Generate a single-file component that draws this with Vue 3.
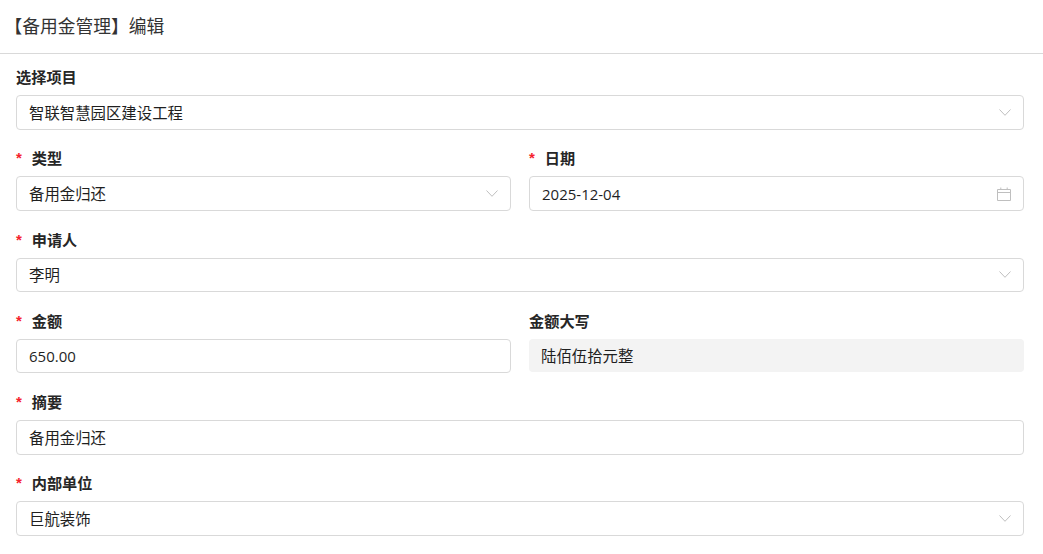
<template>
  <div class="page">
    <div class="header">【备用金管理】编辑</div>
    <form class="form">
      <div class="item">
        <label class="label">选择项目</label>
        <div class="control">
          <span>智联智慧园区建设工程</span>
          <svg class="arrow" viewBox="0 0 12 7"><path d="M.5.5 6 6.3 11.5.5" /></svg>
        </div>
      </div>
      <div class="row">
        <div class="item">
          <label class="label"><i class="star">*</i>类型</label>
          <div class="control">
            <span>备用金归还</span>
            <svg class="arrow" viewBox="0 0 12 7"><path d="M.5.5 6 6.3 11.5.5" /></svg>
          </div>
        </div>
        <div class="item">
          <label class="label"><i class="star">*</i>日期</label>
          <div class="control">
            <span class="num">2025-12-04</span>
            <svg class="calendar" viewBox="0 0 14 14">
              <path d="M.5 2.5h13v11H.5zM.5 5.5h13M3.8.5v2.5M10.2.5v2.5" />
            </svg>
          </div>
        </div>
      </div>
      <div class="item">
        <label class="label"><i class="star">*</i>申请人</label>
        <div class="control">
          <span>李明</span>
          <svg class="arrow" viewBox="0 0 12 7"><path d="M.5.5 6 6.3 11.5.5" /></svg>
        </div>
      </div>
      <div class="row">
        <div class="item">
          <label class="label"><i class="star">*</i>金额</label>
          <div class="control"><span class="num">650.00</span></div>
        </div>
        <div class="item">
          <label class="label">金额大写</label>
          <div class="control readonly"><span>陆佰伍拾元整</span></div>
        </div>
      </div>
      <div class="item">
        <label class="label"><i class="star">*</i>摘要</label>
        <div class="control"><span>备用金归还</span></div>
      </div>
      <div class="item">
        <label class="label"><i class="star">*</i>内部单位</label>
        <div class="control">
          <span>巨航装饰</span>
          <svg class="arrow" viewBox="0 0 12 7"><path d="M.5.5 6 6.3 11.5.5" /></svg>
        </div>
      </div>
    </form>
  </div>
</template>

<script setup>
</script>

<style scoped>
.page {
  width: 1043px;
  height: 554px;
  overflow: hidden;
  background: #fff;
  color: #1f1f1f;
  font-family: "Open Sans", "Noto Sans CJK SC", sans-serif;
  font-size: 15.4px;
}
.header {
  height: 54px;
  box-sizing: border-box;
  border-bottom: 1px solid #d9d9d9;
  padding-left: 4.4px;
  font-size: 17.75px;
  line-height: 53px;
  color: #333;
}
.form {
  display: flex;
  flex-direction: column;
  gap: 15.08px;
  padding: 9.5px 19px 0 16px;
}
.row {
  display: grid;
  grid-template-columns: 1fr 1fr;
  gap: 18px;
}
.label {
  display: flex;
  align-items: center;
  height: 25px;
  margin-bottom: 6.5px;
  font-weight: 700;
  font-size: 15.2px;
  color: #262626;
}
.star {
  width: 15.7px;
  margin-top: 1px;
  font-family: "Liberation Sans", sans-serif;
  font-style: normal;
  font-weight: 700;
  font-size: 15px;
  color: #f5222d;
}
.control {
  display: flex;
  align-items: center;
  justify-content: space-between;
  box-sizing: border-box;
  height: 34.7px;
  padding: 0 12px;
  border: 1px solid #d9d9d9;
  border-radius: 4px;
  background: #fff;
  color: #1f1f1f;
}
.num {
  font-size: 15px;
}
.readonly {
  height: 33.4px;
  border: 0;
  background: #f3f3f3;
}
.arrow {
  width: 12px;
  height: 7px;
  fill: none;
  stroke: #bfbfbf;
  stroke-width: 1;
}
.calendar {
  width: 14px;
  height: 14px;
  fill: none;
  stroke: #bfbfbf;
  stroke-width: 1;
}
</style>
